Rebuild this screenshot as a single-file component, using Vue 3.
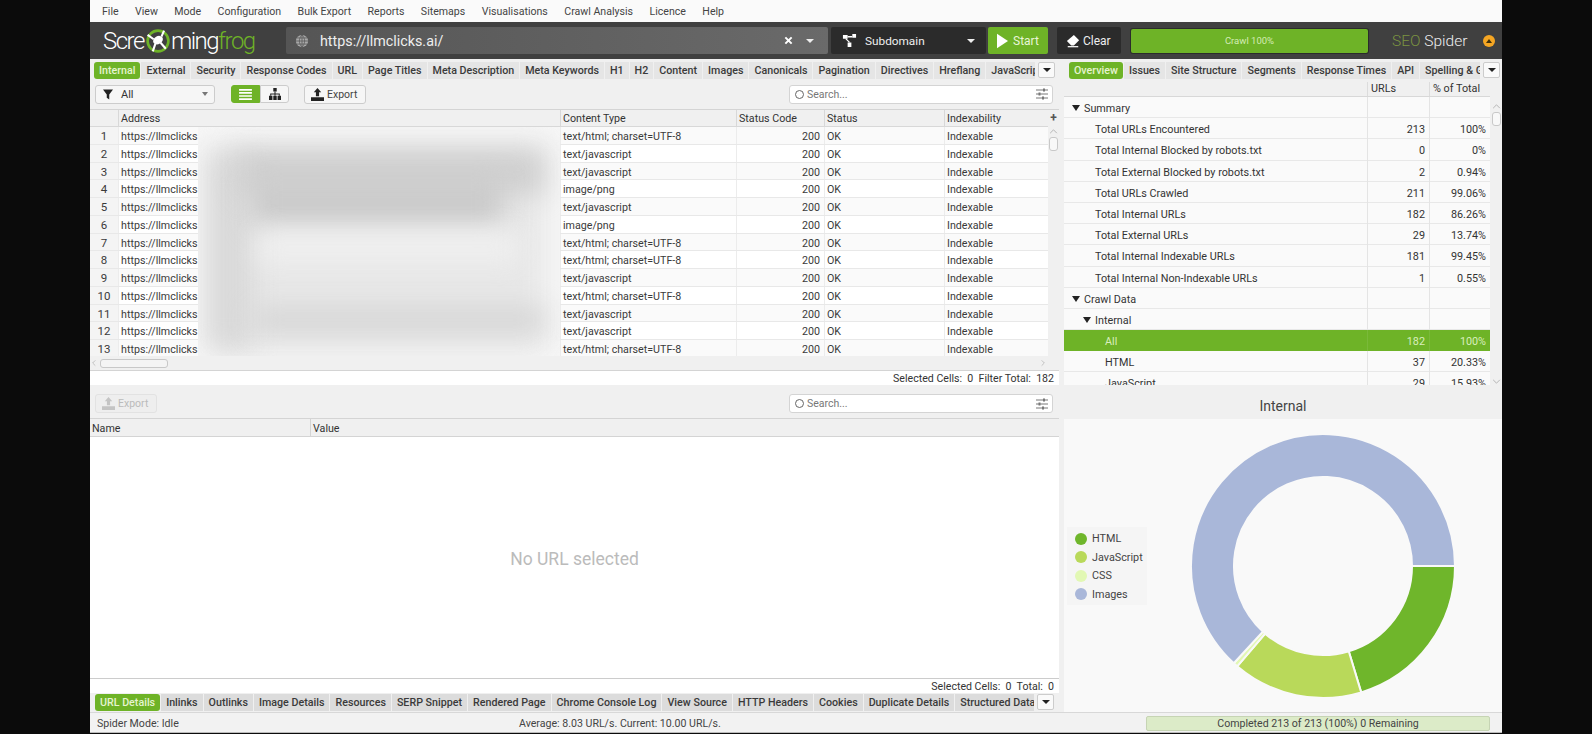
<script setup>
const menus = ['File', 'View', 'Mode', 'Configuration', 'Bulk Export', 'Reports', 'Sitemaps', 'Visualisations', 'Crawl Analysis', 'Licence', 'Help']

const mainTabs = ['Internal', 'External', 'Security', 'Response Codes', 'URL', 'Page Titles', 'Meta Description', 'Meta Keywords', 'H1', 'H2', 'Content', 'Images', 'Canonicals', 'Pagination', 'Directives', 'Hreflang', 'JavaScript']
const sideTabs = ['Overview', 'Issues', 'Site Structure', 'Segments', 'Response Times', 'API', 'Spelling & Grammar']
const detailTabs = ['URL Details', 'Inlinks', 'Outlinks', 'Image Details', 'Resources', 'SERP Snippet', 'Rendered Page', 'Chrome Console Log', 'View Source', 'HTTP Headers', 'Cookies', 'Duplicate Details', 'Structured Data']

const html = 'text/html; charset=UTF-8'
const js = 'text/javascript'
const png = 'image/png'
const rows = [html, js, js, png, js, png, html, html, js, html, js, js, html]

const tree = [
  { label: 'Summary', level: 0, arrow: true },
  { label: 'Total URLs Encountered', level: 1, urls: '213', pct: '100%' },
  { label: 'Total Internal Blocked by robots.txt', level: 1, urls: '0', pct: '0%' },
  { label: 'Total External Blocked by robots.txt', level: 1, urls: '2', pct: '0.94%' },
  { label: 'Total URLs Crawled', level: 1, urls: '211', pct: '99.06%' },
  { label: 'Total Internal URLs', level: 1, urls: '182', pct: '86.26%' },
  { label: 'Total External URLs', level: 1, urls: '29', pct: '13.74%' },
  { label: 'Total Internal Indexable URLs', level: 1, urls: '181', pct: '99.45%' },
  { label: 'Total Internal Non-Indexable URLs', level: 1, urls: '1', pct: '0.55%' },
  { label: 'Crawl Data', level: 0, arrow: true },
  { label: 'Internal', level: 1, arrow: true },
  { label: 'All', level: 2, urls: '182', pct: '100%', selected: true },
  { label: 'HTML', level: 2, urls: '37', pct: '20.33%' },
  { label: 'JavaScript', level: 2, urls: '29', pct: '15.93%' },
]

const legend = [
  { name: 'HTML', value: 37, color: '#6fb62b' },
  { name: 'JavaScript', value: 29, color: '#b9d95a' },
  { name: 'CSS', value: 1, color: '#e2f8b4' },
  { name: 'Images', value: 115, color: '#a9b7d9' },
]

// donut slices, clockwise from 3 o'clock
const slicePoint = (r, a) => `${(135 + r * Math.cos(a)).toFixed(2)} ${(135 + r * Math.sin(a)).toFixed(2)}`
const slices = (() => {
  const total = legend.reduce((sum, s) => sum + s.value, 0)
  let start = 0
  return legend.map((s) => {
    const end = start + (s.value / total) * Math.PI * 2
    const large = end - start > Math.PI ? 1 : 0
    const d = `M${slicePoint(132, start)}A132 132 0 ${large} 1 ${slicePoint(132, end)}L${slicePoint(89, end)}A89 89 0 ${large} 0 ${slicePoint(89, start)}Z`
    start = end
    return { d, color: s.color, name: s.name }
  })
})()
</script>

<template>
  <div class="app">
    <nav class="menu-bar">
      <span v-for="m in menus" :key="m">{{ m }}</span>
    </nav>

    <header class="top-bar">
      <div class="logo">
        <span>Scre</span>
        <svg class="logo-frog" viewBox="0 0 30 30" width="26" height="26">
          <circle cx="15" cy="15" r="12" fill="none" stroke="#6eb327" stroke-width="3" />
          <ellipse cx="15" cy="14" rx="6" ry="4.500" transform="rotate(-30 15 14)" fill="#fff" />
          <path d="M10 13L3 8M19 10l3-7M18 17l6 7M12 18l-3 9" stroke="#fff" stroke-width="2.400" fill="none" />
        </svg>
        <span>ming</span><span class="logo-green">frog</span>
      </div>

      <div class="url-box">
        <svg class="globe" viewBox="0 0 16 16" width="14" height="14">
          <circle cx="8" cy="8" r="7" fill="#a8a8a8" />
          <path d="M1 8h14M2 4.500h12M2 11.500h12M8 1v14M8 1c-4 4-4 10 0 14M8 1c4 4 4 10 0 14" fill="none" stroke="#5f5f5f" stroke-width="1" />
        </svg>
        <span class="url-text">https://llmclicks.ai/</span>
        <svg class="url-clear" viewBox="0 0 10 10" width="9" height="9">
          <path d="M1.500 1.500l7 7M8.500 1.500l-7 7" stroke="#fff" stroke-width="2.200" />
        </svg>
        <span class="caret caret-light"></span>
      </div>

      <div class="dark-box mode-box">
        <svg viewBox="0 0 16 16" width="15" height="15">
          <path d="M1 2h5v4H1zM11 1h4v4h-4zM6 10h4v5H6z" fill="#fff" />
          <path d="M6 4h5M4 6l4 4" stroke="#fff" stroke-width="1.400" />
        </svg>
        <span class="mode-label">Subdomain</span>
        <span class="caret caret-light"></span>
      </div>

      <button class="start-btn">
        <svg viewBox="0 0 12 16" width="11" height="16"><path d="M0 0l12 8-12 8z" fill="#fff" /></svg>
        Start
      </button>

      <button class="dark-box clear-btn">
        <svg viewBox="0 0 16 16" width="14" height="14">
          <path d="M9 1l6 6-6 6H6L1 8z" fill="#fff" />
          <path d="M2 14.500h12" stroke="#fff" stroke-width="1.400" />
        </svg>
        Clear
      </button>

      <div class="crawl-progress">Crawl 100%</div>

      <div class="brand"><span class="brand-seo">SEO</span> Spider</div>
      <span class="update-dot"><span></span></span>
    </header>

    <main class="workspace">
      <!-- results table -->
      <section class="pane">
        <div class="tab-row">
          <div class="tab-strip">
            <span v-for="(t, i) in mainTabs" :key="t" class="tab" :class="{ active: i === 0 }">{{ t }}</span>
          </div>
          <span class="tab-more"><span class="caret"></span></span>
        </div>

        <div class="toolbar">
          <div class="filter-select">
            <svg viewBox="0 0 12 12" width="10" height="11"><path d="M0 0h12L7.500 6v6l-3-2V6z" fill="#222" /></svg>
            <span>All</span>
            <span class="caret caret-grey"></span>
          </div>
          <div class="view-switch">
            <span class="view-btn on">
              <svg viewBox="0 0 14 12" width="13" height="11"><path d="M0 1h14M0 4.300h14M0 7.600h14M0 11h14" stroke="#fff" stroke-width="1.800" /></svg>
            </span>
            <span class="view-btn">
              <svg viewBox="0 0 14 14" width="12" height="12">
                <path d="M5 0h4v4H5zM0 9h4v5H0zM5 9h4v5H5zM10 9h4v5h-4z" fill="#222" />
                <path d="M7 4v3M2 9V7h10v2M7 7v2" fill="none" stroke="#222" stroke-width="1.200" />
              </svg>
            </span>
          </div>
          <button class="tool-btn">
            <svg viewBox="0 0 14 14" width="13" height="13">
              <path d="M7 0l4 4.500H8.700V9H5.300V4.500H3zM0 10h14v4H0z" fill="#222" />
            </svg>
            Export
          </button>
          <div class="search-box">
            <span class="search-ring"></span>
            <span class="search-text">Search...</span>
            <svg class="sliders" viewBox="0 0 12 12" width="12" height="12">
              <path d="M0 2h12M0 6h12M0 10h12" stroke="#777" stroke-width="1" />
              <path d="M7 .5h2v3H7zM2.500 4.500h2v3h-2zM6 8.500h2v3H6z" fill="#777" />
            </svg>
          </div>
        </div>

        <div class="table-wrap">
          <div class="table">
            <div class="table-head grid-row">
              <span></span>
              <span>Address</span>
              <span>Content Type</span>
              <span>Status Code</span>
              <span>Status</span>
              <span>Indexability</span>
            </div>
            <div class="table-body">
              <div v-for="(type, i) in rows" :key="i" class="grid-row table-row">
                <span class="row-no">{{ i + 1 }}</span>
                <span>https://llmclicks</span>
                <span>{{ type }}</span>
                <span class="num">200</span>
                <span>OK</span>
                <span>Indexable</span>
              </div>
              <div class="redact">
                <i class="blob base"></i>
                <i class="blob left"></i>
                <i class="blob top"></i>
                <i class="blob mid"></i>
                <i class="blob hole"></i>
                <i class="blob bottom"></i>
              </div>
            </div>
          </div>
          <div class="v-scroll">
            <span class="plus">+</span>
            <svg class="chev" viewBox="0 0 10 6" width="9" height="5"><path d="M1 5l4-4 4 4" fill="none" stroke="#aaa" /></svg>
            <span class="v-thumb"></span>
          </div>
        </div>

        <div class="h-scroll">
          <svg viewBox="0 0 6 10" width="4" height="8"><path d="M5 1L1 5l4 4" fill="none" stroke="#aaa" /></svg>
          <span class="h-thumb"></span>
          <svg class="h-right" viewBox="0 0 6 10" width="4" height="8"><path d="M1 1l4 4-4 4" fill="none" stroke="#aaa" /></svg>
        </div>
        <div class="pane-foot">Selected Cells:&nbsp; 0&nbsp; Filter Total:&nbsp; 182</div>
      </section>

      <!-- overview tree -->
      <aside class="pane side-pane">
        <div class="tab-row side-tabs">
          <div class="tab-strip">
            <span v-for="(t, i) in sideTabs" :key="t" class="tab" :class="{ active: i === 0 }">{{ t }}</span>
          </div>
          <span class="tab-more"><span class="caret"></span></span>
        </div>
        <div class="tree-wrap">
          <div class="tree">
            <div class="tree-head tree-row">
              <span></span>
              <span>URLs</span>
              <span>% of Total</span>
            </div>
            <div v-for="n in tree" :key="n.label" class="tree-row tree-item" :class="{ selected: n.selected }">
              <span class="tree-label" :class="'lvl-' + n.level">
                <span v-if="n.arrow" class="tree-arrow"></span>{{ n.label }}
              </span>
              <span class="num">{{ n.urls }}</span>
              <span class="num">{{ n.pct }}</span>
            </div>
          </div>
          <div class="v-scroll side-scroll">
            <svg class="chev" viewBox="0 0 10 6" width="9" height="5"><path d="M1 5l4-4 4 4" fill="none" stroke="#aaa" /></svg>
            <span class="v-thumb"></span>
            <svg class="chev chev-down" viewBox="0 0 10 6" width="9" height="5"><path d="M1 1l4 4 4-4" fill="none" stroke="#aaa" /></svg>
          </div>
        </div>
      </aside>

      <!-- url details -->
      <section class="pane">
        <div class="toolbar lower-toolbar">
          <button class="tool-btn disabled">
            <svg viewBox="0 0 14 14" width="13" height="13">
              <path d="M7 0l4 4.500H8.700V9H5.300V4.500H3zM0 10h14v4H0z" fill="#c4c4c4" />
            </svg>
            Export
          </button>
          <div class="search-box">
            <span class="search-ring"></span>
            <span class="search-text">Search...</span>
            <svg class="sliders" viewBox="0 0 12 12" width="12" height="12">
              <path d="M0 2h12M0 6h12M0 10h12" stroke="#777" stroke-width="1" />
              <path d="M7 .5h2v3H7zM2.500 4.500h2v3h-2zM6 8.500h2v3H6z" fill="#777" />
            </svg>
          </div>
        </div>
        <div class="detail-head">
          <span>Name</span>
          <span>Value</span>
        </div>
        <div class="detail-body">No URL selected</div>
        <div class="pane-foot detail-foot">Selected Cells:&nbsp; 0&nbsp; Total:&nbsp; 0</div>
        <div class="tab-row detail-tabs">
          <div class="tab-strip">
            <span v-for="(t, i) in detailTabs" :key="t" class="tab" :class="{ active: i === 0 }">{{ t }}</span>
          </div>
          <span class="tab-more"><span class="caret"></span></span>
        </div>
      </section>

      <!-- chart -->
      <aside class="pane side-pane">
        <div class="chart-title">Internal</div>
        <div class="chart-area">
          <ul class="legend">
            <li v-for="l in legend" :key="l.name">
              <i :style="{ background: l.color }"></i>{{ l.name }}
            </li>
          </ul>
          <svg class="donut" viewBox="0 0 270 270" width="270" height="270">
            <path v-for="s in slices" :key="s.name" :d="s.d" :fill="s.color" stroke="#f9f9f9" stroke-width="2" />
          </svg>
        </div>
      </aside>
    </main>

    <footer class="status-bar">
      <span class="status-mode">Spider Mode: Idle</span>
      <span class="status-speed">Average: 8.03 URL/s. Current: 10.00 URL/s.</span>
      <span class="status-progress">Completed 213 of 213 (100%) 0 Remaining</span>
    </footer>
  </div>
</template>

<style scoped>
.app {
  width: 1412px;
  height: 733px;
  margin: 0 auto;
  display: flex;
  flex-direction: column;
  background: #f0f0f0;
  color: #333;
  font-family: Roboto, "Liberation Sans", sans-serif;
  font-size: 11px;
  overflow: hidden;
}

.menu-bar {
  height: 22px;
  flex: none;
  display: flex;
  align-items: center;
  gap: 16.400px;
  padding-left: 12px;
  background: #fafafa;
  color: #444;
  font-size: 10.600px;
}

.top-bar {
  height: 37px;
  flex: none;
  display: flex;
  align-items: center;
  background: #404040;
  color: #fff;
  position: relative;
}

.logo {
  width: 196px;
  flex: none;
  display: flex;
  align-items: center;
  padding-left: 13px;
  box-sizing: border-box;
  font-size: 24px;
  font-weight: 300;
  letter-spacing: -1.500px;
  color: #fff;
}

.logo-frog {
  margin: 0 0 0 1px;
}

.logo-green {
  color: #6eb327;
}

.url-box {
  width: 542px;
  height: 27px;
  flex: none;
  display: flex;
  align-items: center;
  background: linear-gradient(90deg, #555, #6a6a6a);
  border-radius: 2px;
}

.globe {
  margin-left: 9px;
}

.url-text {
  margin-left: 11px;
  font-size: 14.300px;
  color: #eee;
  flex: 1;
}

.url-clear {
  margin-right: 13px;
}

.caret {
  display: inline-block;
  width: 0;
  height: 0;
  border-left: 4px solid transparent;
  border-right: 4px solid transparent;
  border-top: 4px solid #222;
}

.caret-light {
  border-top-color: #eee;
}

.caret-grey {
  border-top-color: #777;
  border-left-width: 3px;
  border-right-width: 3px;
}

.url-box .caret {
  margin-right: 14px;
}

.dark-box {
  height: 27px;
  flex: none;
  display: flex;
  align-items: center;
  background: #2b2b2b;
  border: 0;
  border-radius: 2px;
  color: #eee;
}

.mode-box {
  width: 155px;
  margin-left: 3px;
  padding-left: 11px;
  box-sizing: border-box;
}

.mode-label {
  flex: 1;
  margin-left: 8px;
  font-size: 11.800px;
}

.mode-box .caret {
  margin-right: 11px;
}

.start-btn {
  width: 60px;
  height: 27px;
  flex: none;
  margin-left: 2px;
  padding: 0 0 0 9px;
  display: flex;
  align-items: center;
  gap: 5px;
  background: #6eb327;
  border: 0;
  border-radius: 2px;
  color: #e8f5d8;
  font: 12px Roboto, sans-serif;
}

.clear-btn {
  width: 64px;
  margin-left: 9px;
  padding: 0 0 0 9px;
  gap: 3px;
  font: 12px Roboto, sans-serif;
}

.crawl-progress {
  width: 237px;
  height: 24px;
  flex: none;
  margin-left: 10px;
  display: flex;
  align-items: center;
  justify-content: center;
  background: #6eb327;
  border-radius: 2px;
  box-shadow: 0 0 0 1px #2b2b2b;
  color: #d4ecb4;
  font-size: 9.500px;
}

.brand {
  margin-left: 24px;
  font-size: 15.500px;
  font-weight: 300;
  color: #eee;
}

.brand-seo {
  color: #7c9440;
}

.update-dot {
  position: absolute;
  right: 7px;
  top: 13px;
  width: 12px;
  height: 12px;
  border-radius: 50%;
  background: #f5a623;
  display: flex;
  align-items: center;
  justify-content: center;
}

.update-dot span {
  width: 0;
  height: 0;
  border-left: 3px solid transparent;
  border-right: 3px solid transparent;
  border-bottom: 4px solid #40300a;
}

.workspace {
  flex: 1;
  min-height: 0;
  display: grid;
  grid-template-columns: 969px 443px;
  grid-template-rows: 326px 327px;
}

.pane {
  display: flex;
  flex-direction: column;
  min-width: 0;
  min-height: 0;
  overflow: hidden;
}

.side-pane {
  padding-left: 5px;
  background: #f0f0f0;
}

.tab-row {
  height: 23px;
  flex: none;
  display: flex;
  align-items: flex-start;
  padding: 3px 4px 0;
  box-sizing: border-box;
}

.tab-strip {
  width: 941px;
  flex: none;
  display: flex;
  gap: 1px;
  overflow: hidden;
}

.tab {
  flex: none;
  height: 17px;
  line-height: 18px;
  padding: 0 5px;
  background: #e5e5e5;
  font-weight: 500;
  font-size: 10.700px;
  color: #3a3a3a;
  white-space: nowrap;
}

.tab.active {
  background: #6eb327;
  border-radius: 3px;
  color: #e6f4d0;
}

.tab-more {
  width: 17px;
  height: 16px;
  flex: none;
  margin-left: 3px;
  display: flex;
  align-items: center;
  justify-content: center;
  background: #fafafa;
  border: 1px solid #ccc;
  border-radius: 2px;
  box-sizing: border-box;
}

.toolbar {
  height: 28px;
  flex: none;
  display: flex;
  align-items: center;
  padding: 0 6px 3px 5px;
  box-sizing: border-box;
  border-bottom: 1px solid #d4d4d4;
}

.filter-select {
  width: 120px;
  height: 19px;
  flex: none;
  display: flex;
  align-items: center;
  gap: 8px;
  padding: 0 6px 0 7px;
  box-sizing: border-box;
  background: #f6f6f6;
  border: 1px solid #ccc;
  border-radius: 3px;
}

.filter-select span:first-of-type {
  flex: 1;
}

.view-switch {
  margin-left: 16px;
  display: flex;
}

.view-btn {
  width: 29px;
  height: 18px;
  display: flex;
  align-items: center;
  justify-content: center;
  background: #f6f6f6;
  border: 1px solid #ccc;
  border-radius: 0 3px 3px 0;
  box-sizing: border-box;
}

.view-btn.on {
  background: #6eb327;
  border-color: #6eb327;
  border-radius: 3px 0 0 3px;
}

.tool-btn {
  width: 62px;
  height: 19px;
  flex: none;
  margin-left: 15px;
  padding: 0 0 0 6px;
  display: flex;
  align-items: center;
  gap: 3px;
  background: #f6f6f6;
  border: 1px solid #ccc;
  border-radius: 3px;
  color: #444;
  font: 10.500px Roboto, sans-serif;
}

.tool-btn.disabled {
  margin-left: 0;
  border-color: #e2e2e2;
  background: #eee;
  color: #bbb;
}

.search-box {
  width: 264px;
  height: 19px;
  flex: none;
  margin-left: auto;
  display: flex;
  align-items: center;
  padding: 0 4px 0 5px;
  box-sizing: border-box;
  background: #fff;
  border: 1px solid #d4d4d4;
  border-radius: 3px;
}

.search-ring {
  width: 9px;
  height: 9px;
  border: 1.500px solid #666;
  border-radius: 50%;
  box-sizing: border-box;
  flex: none;
  margin-right: 3px;
}

.search-text {
  flex: 1;
  color: #777;
  font-size: 10.500px;
}

.table-wrap {
  flex: none;
  height: 246px;
  display: flex;
  background: #fff;
  overflow: hidden;
}

.table {
  width: 958px;
  flex: none;
}

.grid-row {
  display: grid;
  grid-template-columns: 28px 442px 176px 88px 120px 104px;
}

.grid-row > span {
  padding: 0 2px;
  white-space: nowrap;
  overflow: hidden;
}

.table-head {
  height: 17px;
  line-height: 18px;
  background: #f0f0f0;
  border-bottom: 1px solid #d8d8d8;
  box-sizing: border-box;
  font-size: 10.700px;
}

.table-head > span + span {
  border-left: 1px solid #d8d8d8;
}

.table-body {
  position: relative;
}

.table-row {
  height: 17.750px;
  line-height: 19px;
  box-sizing: border-box;
  border-bottom: 1px solid #e8e8e8;
  font-size: 10.700px;
  color: #3a3a3a;
}

.table-row:nth-child(odd) {
  background: #fafafa;
}

.table-row > span + span {
  border-left: 1px solid #ececec;
}

.table-row .row-no {
  background: #f4f4f4;
  text-align: center;
  font-size: 11.500px;
}

.grid-row > .num,
.num {
  text-align: right;
  padding-right: 4px;
}

.redact {
  position: absolute;
  left: 108px;
  top: 0;
  width: 362px;
  height: 231px;
  overflow: hidden;
  background: #f6f6f6;
}

.blob {
  position: absolute;
  display: block;
  filter: blur(13px);
}

.blob.base {
  left: 14px;
  top: 20px;
  width: 334px;
  height: 204px;
  background: #e8e8e8;
}

.blob.left {
  left: 10px;
  top: 26px;
  width: 44px;
  height: 196px;
  background: #d9d9d9;
}

.blob.top {
  left: 40px;
  top: 22px;
  width: 306px;
  height: 46px;
  background: #d0d0d0;
}

.blob.mid {
  left: 54px;
  top: 50px;
  width: 250px;
  height: 50px;
  background: #cbcbcb;
}

.blob.hole {
  left: 60px;
  top: 104px;
  width: 260px;
  height: 30px;
  background: #f0f0f0;
}

.blob.bottom {
  left: 56px;
  top: 180px;
  width: 290px;
  height: 26px;
  background: #d6d6d6;
}

.v-scroll {
  width: 11px;
  flex: none;
  display: flex;
  flex-direction: column;
  align-items: center;
  background: #f0f0f0;
}

.plus {
  height: 17px;
  line-height: 16px;
  font-size: 12px;
  font-weight: 700;
  color: #555;
}

.chev {
  flex: none;
  margin-top: 2px;
}

.v-thumb {
  width: 9px;
  height: 14px;
  flex: none;
  margin-top: 3px;
  background: #f8f8f8;
  border: 1px solid #c8c8c8;
  border-radius: 3px;
  box-sizing: border-box;
}

.h-scroll {
  height: 15px;
  flex: none;
  display: flex;
  align-items: center;
  padding-left: 2px;
  background: #f0f0f0;
  border-bottom: 1px solid #d4d4d4;
  box-sizing: border-box;
}

.h-thumb {
  width: 68px;
  height: 9px;
  margin-left: 4px;
  background: #f4f4f4;
  border: 1px solid #c8c8c8;
  border-radius: 3px;
  box-sizing: border-box;
}

.h-right {
  margin-left: auto;
  margin-right: 14px;
}

.pane-foot {
  height: 14px;
  flex: none;
  line-height: 15px;
  padding-right: 5px;
  text-align: right;
  background: #fff;
  font-size: 10.600px;
}

.tree-wrap {
  flex: none;
  height: 303px;
  display: flex;
}

.tree {
  width: 426px;
  flex: none;
  overflow: hidden;
}

.tree-row {
  display: grid;
  grid-template-columns: 303px 62px 61px;
}

.tree-row > span {
  padding: 0 4px 0 3px;
  white-space: nowrap;
}

.tree-head {
  height: 15px;
  line-height: 14px;
  background: #f0f0f0;
  border-bottom: 1px solid #d8d8d8;
  box-sizing: border-box;
  font-size: 10.800px;
}

.tree-head > span + span {
  border-left: 1px solid #dcdcdc;
}

.tree-item {
  height: 21.200px;
  line-height: 23px;
  background: #fafafa;
  border-bottom: 1px solid #e8e8e8;
  box-sizing: border-box;
  font-size: 10.800px;
}

.tree-item > span + span {
  border-left: 1px solid #e4e4e4;
}

.tree-item.selected {
  background: #6eb327;
  color: #d9eebd;
  border-bottom-color: #6eb327;
}

.tree-item.selected > span + span {
  border-left-color: #7ab93a;
}

.tree-label {
  position: relative;
}

.tree-row > .lvl-0 {
  padding-left: 20px;
}

.tree-row > .lvl-1 {
  padding-left: 31px;
}

.tree-row > .lvl-2 {
  padding-left: 41px;
}

.tree-arrow {
  position: absolute;
  margin-left: -12px;
  top: 8px;
  border-left: 4px solid transparent;
  border-right: 4px solid transparent;
  border-top: 6px solid #222;
}

.side-scroll {
  width: 12px;
  padding-top: 20px;
  box-sizing: border-box;
}

.chev-down {
  margin-top: auto;
  margin-bottom: 1px;
}

.toolbar.lower-toolbar {
  height: 34px;
  padding-top: 4px;
  padding-bottom: 0;
}

.detail-head {
  height: 18px;
  flex: none;
  display: grid;
  grid-template-columns: 220px 1fr;
  line-height: 19px;
  background: #f0f0f0;
  border-bottom: 1px solid #d4d4d4;
  box-sizing: border-box;
  font-size: 10.700px;
}

.detail-head span {
  padding-left: 2px;
}

.detail-head span + span {
  border-left: 1px solid #d4d4d4;
}

.detail-body {
  flex: 1;
  min-height: 0;
  display: flex;
  align-items: center;
  justify-content: center;
  padding-top: 3px;
  box-sizing: border-box;
  background: #fff;
  border-bottom: 1px solid #ccc;
  color: #bbb;
  font-size: 17.500px;
}

.pane-foot.detail-foot {
  line-height: 16px;
}

.tab-row.detail-tabs {
  height: 19px;
  padding-top: 1px;
  padding-left: 5px;
}

.detail-tabs .tab-strip {
  width: 939px;
}

.detail-tabs .tab {
  background: #dcdcdc;
}

.detail-tabs .tab.active {
  background: #6eb327;
}

.tab-row.side-tabs {
  padding-left: 5px;
}

.side-tabs .tab-strip {
  width: 411px;
}

.chart-title {
  height: 34px;
  flex: none;
  line-height: 42px;
  text-align: center;
  font-size: 14px;
  color: #444;
}

.chart-area {
  flex: 1;
  min-height: 0;
  display: flex;
  align-items: center;
  background: #f9f9f9;
}

.legend {
  width: 80px;
  height: 78px;
  flex: none;
  margin: 0 0 0 3px;
  padding: 3px 0 0 8px;
  list-style: none;
  box-sizing: border-box;
  background: #f5f5f5;
  font-size: 10.800px;
}

.legend li {
  height: 18.500px;
  display: flex;
  align-items: center;
  gap: 5px;
  color: #444;
}

.legend i {
  width: 12px;
  height: 12px;
  border-radius: 50%;
}

.donut {
  flex: none;
  margin-left: 41px;
}

.status-bar {
  height: 21px;
  flex: none;
  display: flex;
  align-items: center;
  padding-top: 1px;
  border-top: 1px solid #d8d8d8;
  border-bottom: 1px solid #bbb;
  box-sizing: border-box;
  background: #f2f2f2;
  font-size: 10.600px;
  color: #444;
}

.status-mode {
  width: 429px;
  padding-left: 7px;
  box-sizing: border-box;
  flex: none;
}

.status-speed {
  width: 627px;
  flex: none;
}

.status-progress {
  width: 344px;
  height: 15px;
  line-height: 14px;
  flex: none;
  text-align: center;
  background: #dcebc8;
  border: 1px solid #c6d4b4;
  border-radius: 2px;
  box-sizing: border-box;
}
</style>

<style>
html,
body {
  margin: 0;
  background: #0b0b0b;
}
</style>
